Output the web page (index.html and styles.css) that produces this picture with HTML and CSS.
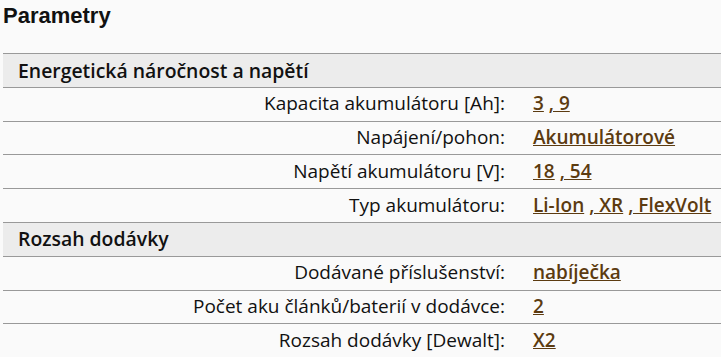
FILE: index.html
```html
<!DOCTYPE html>
<html lang="cs">
<head>
<meta charset="utf-8">
<title>Parametry</title>
<link rel="stylesheet" href="styles.css">
</head>
<body>
<div class="params">
  <h2 class="params-title">Parametry</h2>
  <table class="params-table">
    <tbody>
      <tr class="group"><th colspan="2">Energetická náročnost a napětí</th></tr>
      <tr><td class="label">Kapacita akumulátoru [Ah]:</td><td class="value"><a href="#">3</a> <a href="#">, 9</a></td></tr>
      <tr><td class="label">Napájení/pohon:</td><td class="value"><a href="#">Akumulátorové</a></td></tr>
      <tr><td class="label">Napětí akumulátoru [V]:</td><td class="value"><a href="#">18</a> <a href="#">, 54</a></td></tr>
      <tr><td class="label">Typ akumulátoru:</td><td class="value"><a href="#">Li-Ion</a> <a href="#">, XR</a> <a href="#">, FlexVolt</a></td></tr>
      <tr class="group"><th colspan="2">Rozsah dodávky</th></tr>
      <tr><td class="label">Dodávané příslušenství:</td><td class="value"><a href="#">nabíječka</a></td></tr>
      <tr><td class="label">Počet aku článků/baterií v dodávce:</td><td class="value"><a href="#">2</a></td></tr>
      <tr><td class="label">Rozsah dodávky [Dewalt]:</td><td class="value"><a href="#">X2</a></td></tr>
    </tbody>
  </table>
</div>
</body>
</html>
```
FILE: styles.css
```css
html, body {
  margin: 0;
  padding: 0;
  background: #fafafa;
}
.params {
  padding: 0 0 0 3px;
  font-family: "Open Sans", "DejaVu Sans", sans-serif;
  color: #111;
}
.params-title {
  font-family: "Liberation Sans", Arial, sans-serif;
  font-weight: bold;
  font-size: 22px;
  line-height: 25px;
  margin: 3px 0 25px 0;
  color: #111;
}
.params-table {
  width: 100%;
  border-collapse: collapse;
  font-size: 19px;
}
.params-table th,
.params-table td {
  border-top: 1px solid #999;
  border-bottom: 1px solid #999;
  padding: 3.5px 0;
  line-height: 25.8px;
}
.group th {
  background: #ececec;
  text-align: left;
  font-weight: 600;
  font-size: 19.4px;
  padding-left: 15px;
}
.label {
  width: 502px;
  text-align: right;
  padding-right: 14px !important;
}
.value {
  padding-left: 14px !important;
  font-weight: 600;
}
.value a {
  color: #5c3b10;
  text-decoration: underline;
}
```
